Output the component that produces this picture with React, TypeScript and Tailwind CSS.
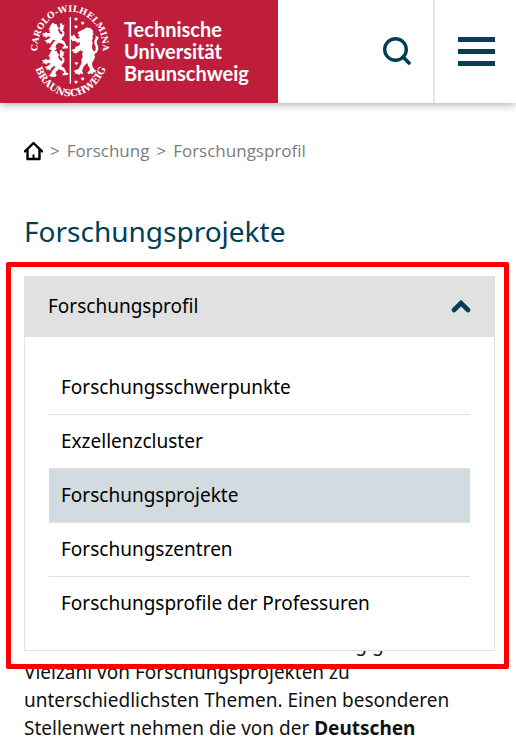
import { useState } from 'react';

const BREADCRUMBS = [
  { label: 'Forschung', href: '#forschung' },
  { label: 'Forschungsprofil', href: '#forschungsprofil' }
];

const MENU_ITEMS = [
  { label: 'Forschungsschwerpunkte', href: '#schwerpunkte' },
  { label: 'Exzellenzcluster', href: '#exzellenzcluster' },
  { label: 'Forschungsprojekte', href: '#projekte', active: true },
  { label: 'Forschungszentren', href: '#zentren' },
  { label: 'Forschungsprofile der Professuren', href: '#professuren' }
];

const SMALL_LION =
  'M154 72 l6 -4 l4 4 l6 1 l2 6 l5 5 l-3 6 l4 8 l6 6 l4 -6 l-7 -6 l-3 -8 l3 -6 l-2 -6 l6 -3 l3 6 l6 1 l-4 5 l2 5 l-5 3 l6 7 l0 9 l-6 8 l-3 6 l8 4 l4 7 l3 8 l6 1 l-2 6 l-16 1 l1 -5 l5 -2 l-4 -7 l-12 -4 l-7 5 l-4 7 l4 5 l-3 5 l-13 1 l-8 -5 l6 -4 l3 -7 l6 -8 l6 -7 l-7 -1 l-6 6 l-4 7 l-5 -4 l-6 3 l1 -6 l-7 -3 l8 -3 l6 -3 l5 -6 l-9 -1 l-4 5 l-5 -5 l-6 2 l2 -6 l-5 -4 l8 -1 l5 -4 l5 4 l9 -2 l-5 -4 l4 -3 l-6 -3 l4 -5 z';

const BIG_LION =
  'M254 86 l6 -4 l6 2 l5 -1 l3 5 l6 4 l-2 5 l3 6 l-4 5 l2 7 l-3 6 l2 9 l-2 9 l1 9 l5 7 l5 -5 l0 -10 l-4 -9 l0 -9 l4 -8 l0 -8 l5 5 l3 -2 l0 7 l-4 6 l-1 7 l4 9 l1 10 l-4 9 l-8 6 l2 8 l-4 10 l-5 8 l1 10 l7 10 l5 3 l-4 6 l-4 -2 l-4 7 l-5 -3 l-7 3 l-3 -6 l6 -4 l2 -7 l-5 -8 l-3 -9 l-8 7 l-5 8 l-3 10 l4 6 l-4 3 l-5 -3 l-4 6 l-4 -5 l-8 1 l0 -6 l-4 -3 l7 -4 l7 -1 l5 -9 l5 -10 l-1 -10 l4 -9 l-2 -8 l3 -7 l-7 -4 l-8 5 l-6 5 l-3 -3 l-5 2 l0 -6 l-6 -2 l5 -4 l6 -2 l7 -7 l7 -4 l1 -8 l-8 1 l-8 -6 l-7 2 l-1 -5 l-6 -2 l4 -4 l-2 -5 l7 -1 l3 -4 l3 5 l3 6 l8 2 l4 -4 l-6 -4 l4 -4 l-6 -4 l4 -5 z';

// hearts scattered around the large lion
const HEARTS = [
  [228, 57],
  [248, 69],
  [228, 80],
  [231, 143],
  [229, 190],
  [248, 236],
  [228, 246]
];

function Seal() {
  return (
    <svg viewBox="90 9 240 285" className="h-[95px] w-20 shrink-0" fill="white" aria-label="Siegel" role="img">
      <defs>
        <path id="sealTop" d="M114 174 C102 86 158 35 211 35 C264 35 320 86 307 174" />
        <path id="sealBottom" d="M99 180 C112 247 161 289 211 289 C261 289 311 247 324 180" />
      </defs>
      <text className="font-['DejaVu_Serif',serif] text-[26px] font-bold">
        <textPath href="#sealTop" startOffset="50%" textAnchor="middle">
          CAROLO-WILHELMINA
        </textPath>
      </text>
      <text className="font-['DejaVu_Serif',serif] text-[29px] font-bold">
        <textPath href="#sealBottom" startOffset="50%" textAnchor="middle">
          BRAUNSCHWEIG
        </textPath>
      </text>
      <rect x="209" y="51" width="4" height="200" />
      <path d={SMALL_LION} />
      <path d={SMALL_LION} transform="translate(0 80)" />
      <path d={BIG_LION} />
      {HEARTS.map(([x, y]) => (
        <path key={`${x}-${y}`} d="M0 6 L-5 0 Q-5 -5 0 -3 Q5 -5 5 0 Z" transform={`translate(${x} ${y})`} />
      ))}
    </svg>
  );
}

function Header() {
  return (
    <header className="relative flex h-[103px] bg-white shadow-[0_2px_8px_rgba(0,0,0,0.3)]">
      <a href="#start" className="flex w-[278px] items-start bg-[#be1e3c] pt-[3px] pl-[30px] text-white">
        <Seal />
        <span className="pt-[15px] pl-[14px] font-['Lato',sans-serif] text-xl leading-[22px] font-bold">
          Technische
          <br />
          Universität
          <br />
          Braunschweig
        </span>
      </a>
      <div className="ml-auto flex">
        <button type="button" aria-label="Suche" className="flex w-[73px] items-center justify-center text-[#003f57]">
          <svg viewBox="0 0 30 30" className="size-[30px]" fill="none" stroke="currentColor">
            <circle cx="13.5" cy="12.5" r="10.8" strokeWidth="3.4" />
            <path d="M21 20 L27 26" strokeWidth="3.8" strokeLinecap="round" />
          </svg>
        </button>
        <button
          type="button"
          aria-label="Menü"
          className="flex w-[83px] flex-col justify-center gap-[7px] border-l-2 border-[#e6e6e6] pr-[21px] pl-[23px]"
        >
          <span className="h-[5px] w-full bg-[#003f57]" />
          <span className="h-[5px] w-full bg-[#003f57]" />
          <span className="h-[5px] w-full bg-[#003f57]" />
        </button>
      </div>
    </header>
  );
}

function Breadcrumb() {
  return (
    <nav
      aria-label="Breadcrumb"
      className="flex h-6 items-center font-['Open_Sans',sans-serif] text-[17px] text-[#7c7c7c]"
    >
      <a href="#start" aria-label="Startseite" className="text-black">
        <svg viewBox="0 0 19 20" className="h-5 w-[19px]" fill="none" stroke="currentColor" strokeWidth="2.4">
          <path d="M1 10.3 L9.5 2 L18 10.3" strokeLinecap="round" strokeLinejoin="round" />
          <path d="M3.5 8.5 V18 H15.5 V8.5" strokeLinejoin="round" />
          <path d="M9.5 13.5 V18" strokeWidth="2" />
        </svg>
      </a>
      {BREADCRUMBS.map((crumb) => (
        <span key={crumb.href} className="flex">
          <span className="px-[7px]">&gt;</span>
          <a href={crumb.href}>{crumb.label}</a>
        </span>
      ))}
    </nav>
  );
}

function SectionMenu() {
  const [open, setOpen] = useState(true);

  return (
    <div className="relative h-[61px]">
      <div className="absolute inset-x-0 top-0 z-10">
        <button
          type="button"
          aria-expanded={open}
          onClick={() => setOpen(!open)}
          className="flex h-[61px] w-full items-center justify-between bg-[#e1e1e1] px-6 text-left text-[19px] text-black"
        >
          Forschungsprofil
          <svg
            viewBox="0 0 20 16"
            className="h-4 w-5"
            fill="none"
            stroke="#003f57"
            strokeWidth="4.6"
            strokeLinecap="round"
          >
            <path d={open ? 'M3 11 L10 4 L17 11' : 'M3 4 L10 11 L17 4'} />
          </svg>
        </button>
        {open && (
          <ul className="border border-t-0 border-[#e1e1e1] bg-white px-6 pt-6 pb-5">
            {MENU_ITEMS.map((item) => (
              <li key={item.href} className="border-b border-[#e1e1e1] last:border-b-0">
                <a
                  href={item.href}
                  className={`flex h-[53px] items-center px-3 text-[19px] text-black ${item.active ? 'bg-[#d1dbe0]' : ''}`}
                >
                  {item.label}
                </a>
              </li>
            ))}
          </ul>
        )}
        {/* Highlight frame */}
        <div className="pointer-events-none absolute -top-[14px] -right-[14px] -bottom-[18px] -left-[18px] rounded-xs border-5 border-[#ff0000]" />
      </div>
    </div>
  );
}

export default function App() {
  return (
    <div className="bg-white font-['Noto_Sans',sans-serif] text-[#111111]">
      <Header />
      <main className="pt-9 pr-[21px] pl-6">
        <Breadcrumb />
        <h1 className="mt-12 mb-[25px] text-[28px] leading-10 text-[#003f57]">Forschungsprojekte</h1>
        <SectionMenu />
        <p className="mt-[293px] pr-2 text-[19px] leading-7">
          Technischen Universität Braunschweig gibt es eine Vielzahl von Forschungsprojekten zu unterschiedlichsten
          Themen. Einen besonderen Stellenwert nehmen die von der <strong>Deutschen</strong>
        </p>
      </main>
    </div>
  );
}
